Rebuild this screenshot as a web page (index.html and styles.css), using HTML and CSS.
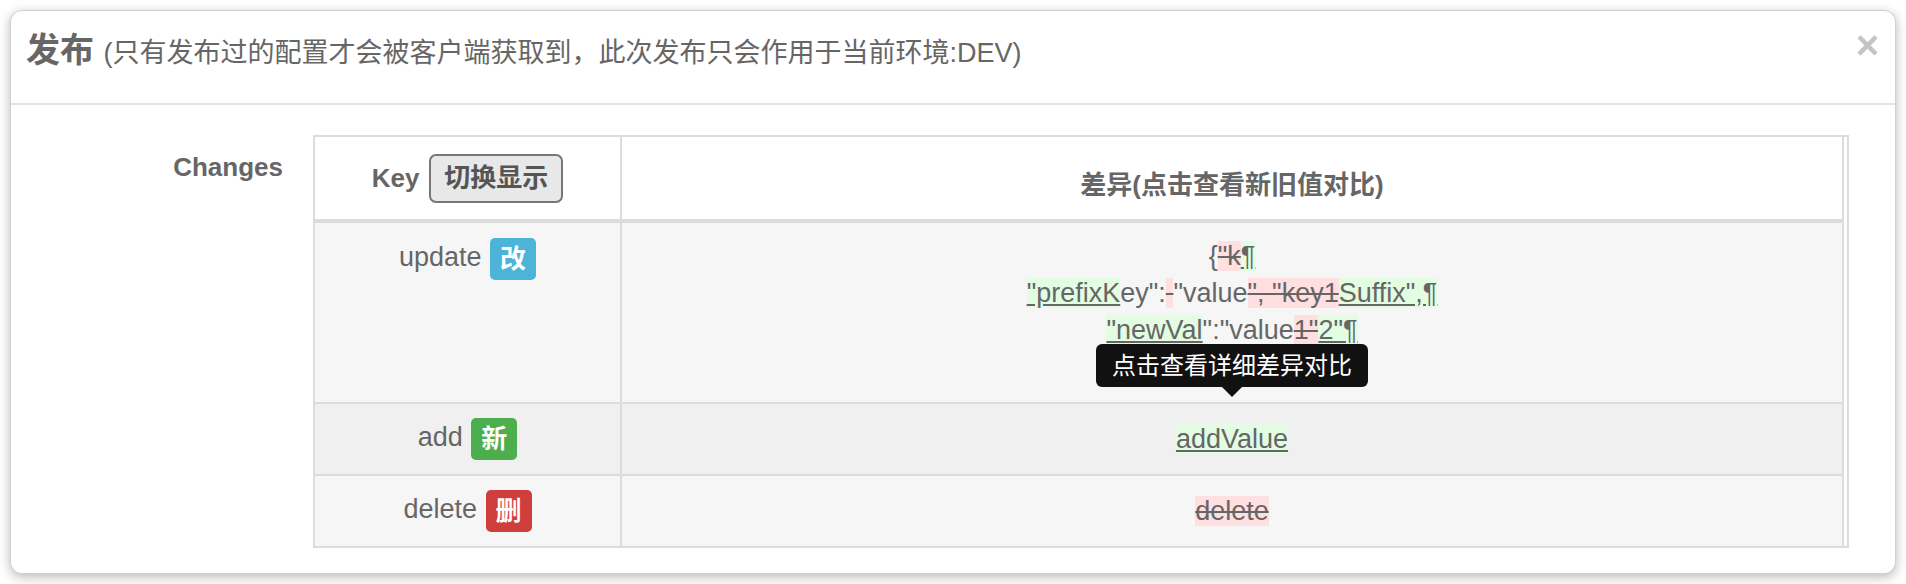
FILE: index.html
```html
<!DOCTYPE html>
<html lang="zh-CN">
<head>
<meta charset="utf-8">
<title>发布</title>
<link rel="stylesheet" href="styles.css">
</head>
<body>
<div class="modal">
  <div class="modal-header">
    <h4 class="modal-title"><span class="title-main">发布</span> <span class="title-sub">(只有发布过的配置才会被客户端获取到，此次发布只会作用于当前环境:DEV)</span></h4>
    <button class="close" type="button">×</button>
  </div>
  <div class="modal-body">
    <label class="control-label">Changes</label>
    <div class="table-wrap">
      <table class="changes">
        <thead>
          <tr>
            <th class="col-key"><div class="key-head"><span>Key</span><button class="toggle" type="button">切换显示</button></div></th>
            <th class="col-diff">差异(点击查看新旧值对比)</th>
          </tr>
        </thead>
        <tbody>
          <tr class="row-odd row-update">
            <td class="key-cell">update <span class="badge badge-info">改</span></td>
            <td class="diff-cell">
              <div class="diff">{<del>"k</del><ins>¶</ins><br><ins>"prefixK</ins>ey":<del> </del>"value<del>", "key1</del><ins>Suffix",¶</ins><br><ins>"newVal</ins>":"value<del>1"</del><ins>2"¶</ins></div>
              <div class="tooltip">点击查看详细差异对比</div>
            </td>
          </tr>
          <tr class="row-hover">
            <td class="key-cell">add <span class="badge badge-success">新</span></td>
            <td class="diff-cell"><div class="diff"><ins>addValue</ins></div></td>
          </tr>
          <tr class="row-odd row-last">
            <td class="key-cell">delete <span class="badge badge-danger">删</span></td>
            <td class="diff-cell"><div class="diff"><del>delete</del></div></td>
          </tr>
        </tbody>
      </table>
    </div>
  </div>
</div>
</body>
</html>
```
FILE: styles.css
```css
html, body {
  margin: 0;
  padding: 0;
  background: #fff;
}

body {
  padding: 10px;
  font-family: "Liberation Sans", "Noto Sans CJK SC", sans-serif;
  color: #666;
}

.modal {
  width: 1886px;
  box-sizing: border-box;
  background: #fff;
  border: 1px solid rgba(0, 0, 0, 0.18);
  border-radius: 12px;
  box-shadow: 0 3px 12px rgba(0, 0, 0, 0.28);
}

.modal-header {
  display: flex;
  align-items: flex-start;
  justify-content: space-between;
  padding: 15px 16px 29px 15px;
  border-bottom: 2px solid #e5e5e5;
}

.modal-title {
  margin: 0;
  height: 48px;
  line-height: 48px;
  font-weight: normal;
  color: #666;
  white-space: nowrap;
}

.title-main {
  font-size: 34px;
  font-weight: bold;
}

.title-sub {
  margin-left: 5px;
  font-size: 27px;
}

.close {
  padding: 0;
  margin: 0;
  border: 0;
  background: none;
  font-family: "Liberation Sans", sans-serif;
  font-size: 40px;
  font-weight: bold;
  line-height: 38px;
  color: #c4c4c4;
  cursor: pointer;
}

.modal-body {
  display: flex;
  align-items: flex-start;
  padding: 30px 46px 25px 0;
}

.control-label {
  flex: 0 0 272px;
  margin-right: 30px;
  padding-top: 14px;
  text-align: right;
  font-size: 26px;
  font-weight: bold;
  line-height: 37px;
  color: #666;
}

.table-wrap {
  flex: 1;
  border: 2px solid #dcdcdc;
  padding-right: 3px;
}

.changes {
  width: 100%;
  table-layout: fixed;
  border-collapse: separate;
  border-spacing: 0;
  border-right: 2px solid #dcdcdc;
  font-size: 26px;
  line-height: 37px;
  color: #666;
}

.changes th {
  padding: 15px 12px;
  font-weight: bold;
  text-align: center;
  vertical-align: bottom;
  background: #fff;
  border-bottom: 4px solid #dcdcdc;
}

.changes th.col-key {
  width: 281px;
  border-right: 2px solid #dcdcdc;
}

.key-head {
  display: flex;
  align-items: center;
  justify-content: center;
  gap: 10px;
  height: 52px;
}

.toggle {
  height: 49px;
  padding: 0 13px;
  font-family: "Liberation Sans", "Noto Sans CJK SC", sans-serif;
  font-size: 26px;
  font-weight: bold;
  line-height: 1;
  color: #555;
  background: #e8e8e8;
  border: 2px solid #777;
  border-radius: 7px;
}

.changes td {
  padding: 14px 12px;
  text-align: center;
  vertical-align: middle;
  border-bottom: 2px solid #dcdcdc;
}

.changes td.key-cell {
  border-right: 2px solid #dcdcdc;
  font-size: 27px;
}

.row-odd td {
  background: #f6f6f6;
}

.row-hover td {
  background: #f0f0f0;
}

.row-last td {
  border-bottom: 0;
}

.row-update td {
  vertical-align: top;
  padding-top: 15px;
  padding-bottom: 53px;
}

.diff-cell {
  position: relative;
}

.diff {
  font-size: 27px;
}

.badge {
  display: inline-block;
  vertical-align: middle;
  height: 42px;
  padding: 0 10px;
  margin-left: 1px;
  font-size: 26px;
  font-weight: bold;
  line-height: 42px;
  color: #fff;
  border-radius: 5px;
}

.badge-info {
  background: #4db3d9;
}

.badge-success {
  background: #4cae4c;
}

.badge-danger {
  background: #cf3d3d;
}

.diff ins {
  text-decoration: underline;
  background: #e2fde2;
}

.diff del {
  text-decoration: line-through;
  background: #ffdfdf;
}

.tooltip {
  position: absolute;
  left: 50%;
  bottom: 15px;
  transform: translateX(-50%);
  padding: 8px 16px;
  font-size: 24px;
  line-height: 27px;
  white-space: nowrap;
  color: #fff;
  background: #111;
  border-radius: 6px;
}

.tooltip::after {
  content: "";
  position: absolute;
  top: 100%;
  left: 50%;
  margin-left: -10px;
  border-width: 10px 10px 0;
  border-style: solid;
  border-color: #111 transparent transparent;
}
```
